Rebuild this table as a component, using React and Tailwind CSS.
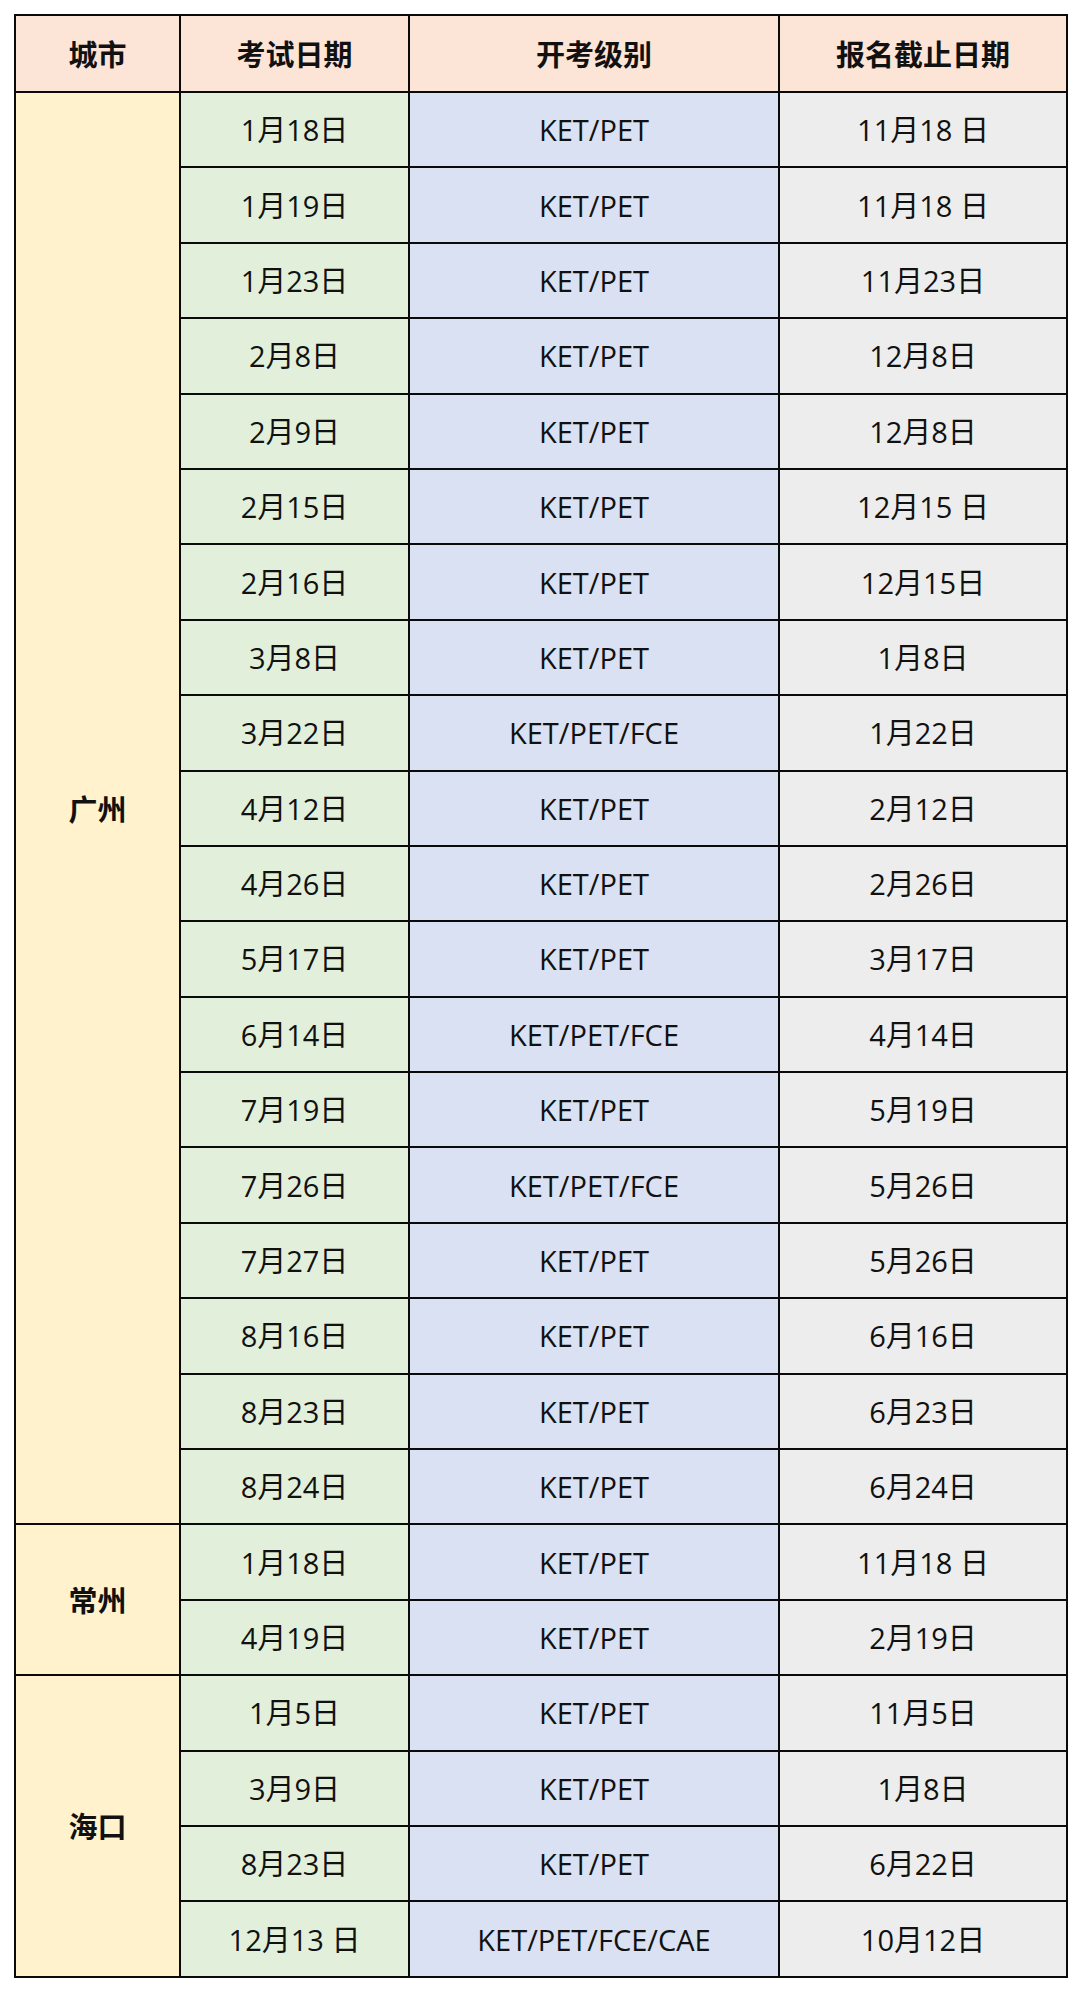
import React from 'react';

const rows = [
    { city: '广州', span: 19, date: '1月18日', level: 'KET/PET', deadline: '11月18 日' },
    { date: '1月19日', level: 'KET/PET', deadline: '11月18 日' },
    { date: '1月23日', level: 'KET/PET', deadline: '11月23日' },
    { date: '2月8日', level: 'KET/PET', deadline: '12月8日' },
    { date: '2月9日', level: 'KET/PET', deadline: '12月8日' },
    { date: '2月15日', level: 'KET/PET', deadline: '12月15 日' },
    { date: '2月16日', level: 'KET/PET', deadline: '12月15日' },
    { date: '3月8日', level: 'KET/PET', deadline: '1月8日' },
    { date: '3月22日', level: 'KET/PET/FCE', deadline: '1月22日' },
    { date: '4月12日', level: 'KET/PET', deadline: '2月12日' },
    { date: '4月26日', level: 'KET/PET', deadline: '2月26日' },
    { date: '5月17日', level: 'KET/PET', deadline: '3月17日' },
    { date: '6月14日', level: 'KET/PET/FCE', deadline: '4月14日' },
    { date: '7月19日', level: 'KET/PET', deadline: '5月19日' },
    { date: '7月26日', level: 'KET/PET/FCE', deadline: '5月26日' },
    { date: '7月27日', level: 'KET/PET', deadline: '5月26日' },
    { date: '8月16日', level: 'KET/PET', deadline: '6月16日' },
    { date: '8月23日', level: 'KET/PET', deadline: '6月23日' },
    { date: '8月24日', level: 'KET/PET', deadline: '6月24日' },
    { city: '常州', span: 2, date: '1月18日', level: 'KET/PET', deadline: '11月18 日' },
    { date: '4月19日', level: 'KET/PET', deadline: '2月19日' },
    { city: '海口', span: 4, date: '1月5日', level: 'KET/PET', deadline: '11月5日' },
    { date: '3月9日', level: 'KET/PET', deadline: '1月8日' },
    { date: '8月23日', level: 'KET/PET', deadline: '6月22日' },
    { date: '12月13 日', level: 'KET/PET/FCE/CAE', deadline: '10月12日' },
];

const cell = 'border-2 border-[#0a0a0a] text-center align-middle p-0';
const cjkBold = { fontFamily: "'Noto Sans CJK SC', sans-serif" };

export default function App() {
    return (
        <div
            className="w-[1080px] h-[1992px] bg-white pt-[14px] pl-[14px]"
            style={{ fontFamily: "'Open Sans', 'Noto Sans CJK SC', sans-serif" }}
        >
            <table className="table-fixed border-collapse w-[1052px] text-[29px] text-[#111] leading-none">
                <colgroup>
                    <col className="w-[165px]" />
                    <col className="w-[229px]" />
                    <col className="w-[370px]" />
                    <col className="w-[288px]" />
                </colgroup>
                <thead>
                    {/* Header */}
                    <tr className="h-[77px] bg-[#fce4d6]">
                        <th className={`${cell} font-bold`} style={cjkBold}>城市</th>
                        <th className={`${cell} font-bold`} style={cjkBold}>考试日期</th>
                        <th className={`${cell} font-bold`} style={cjkBold}>开考级别</th>
                        <th className={`${cell} font-bold`} style={cjkBold}>报名截止日期</th>
                    </tr>
                </thead>
                <tbody>
                    {rows.map((row, i) => (
                        <tr key={i} className="h-[75.4px]">
                            {row.city && (
                                <td rowSpan={row.span} className={`${cell} bg-[#fff2cc] font-bold`} style={cjkBold}>
                                    {row.city}
                                </td>
                            )}
                            <td className={`${cell} bg-[#e2efda] whitespace-pre`}>{row.date}</td>
                            <td className={`${cell} bg-[#d9e1f2]`}>{row.level}</td>
                            <td className={`${cell} bg-[#ededed] whitespace-pre`}>{row.deadline}</td>
                        </tr>
                    ))}
                </tbody>
            </table>
        </div>
    );
}
